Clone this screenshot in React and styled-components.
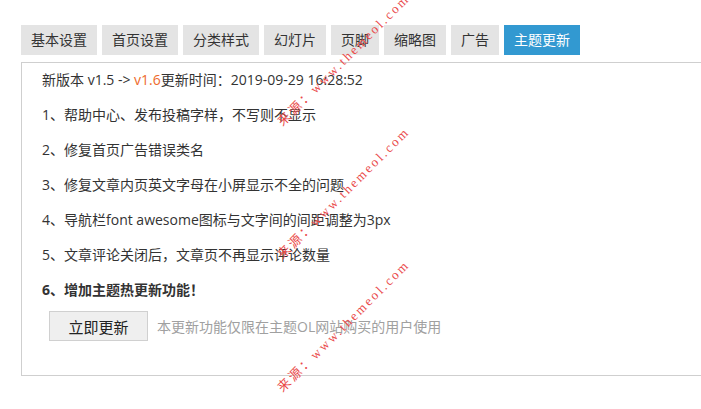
import React from 'react';
import styled, { createGlobalStyle } from 'styled-components';

const GlobalStyle = createGlobalStyle`
  html, body {
    margin: 0;
    padding: 0;
    background: #fff;
    overflow: hidden;
  }
  body {
    font-family: "Open Sans", "Noto Sans CJK SC", sans-serif;
    color: #333;
  }
`;

const Page = styled.div`
  position: relative;
  width: 701px;
  height: 409px;
  padding: 25px 0 0 21px;
  box-sizing: border-box;
  overflow: hidden;
`;

const Tabs = styled.div`
  display: flex;
  gap: 5px;
  margin-bottom: 7px;
`;

const Tab = styled.div`
  height: 30px;
  line-height: 30px;
  padding: 0 10px;
  font-size: 14px;
  background: ${(props) => (props.active ? '#3299d1' : '#e4e4e4')};
  color: ${(props) => (props.active ? '#fff' : '#333')};
`;

const Panel = styled.div`
  border: 1px solid #cfcfcf;
  margin-right: -30px;
  height: 314px;
  box-sizing: border-box;
  padding: 6px 20px 0;
`;

const Line = styled.p`
  margin: 0 0 14px;
  font-size: 14px;
  line-height: 21px;
  font-weight: ${(props) => (props.bold ? 700 : 400)};
  white-space: nowrap;
`;

const Version = styled.span`
  color: #ee6a2c;
`;

const ActionRow = styled.div`
  display: flex;
  align-items: center;
  gap: 9px;
  margin-left: 7px;
  margin-top: -3px;
`;

const UpdateButton = styled.button`
  width: 99px;
  height: 30px;
  background: #efefef;
  border: 1px solid #d0d0d0;
  font-family: inherit;
  font-size: 15px;
  color: #222;
  padding: 0;
`;

const Hint = styled.span`
  font-size: 14px;
  color: #a0a0a0;
`;

const Watermark = styled.span`
  position: absolute;
  left: 280px;
  top: ${(props) => props.y - 7}px;
  line-height: 14px;
  font-family: "Liberation Serif", "Noto Sans CJK SC", serif;
  font-size: 13px;
  letter-spacing: 2.4px;
  color: #ea4a4a;
  white-space: nowrap;
  transform-origin: 0 50%;
  transform: rotate(-45deg);
  pointer-events: none;
`;

const tabs = ['基本设置', '首页设置', '分类样式', '幻灯片', '页脚', '缩略图', '广告', '主题更新'];

const changes = [
  '1、帮助中心、发布投稿字样，不写则不显示',
  '2、修复首页广告错误类名',
  '3、修复文章内页英文字母在小屏显示不全的问题',
  '4、导航栏font awesome图标与文字间的间距调整为3px',
  '5、文章评论关闭后，文章页不再显示评论数量',
];

const App = () => (
  <>
    <GlobalStyle />
    <Page>
      <Tabs>
        {tabs.map((t) => (
          <Tab key={t} active={t === '主题更新'}>{t}</Tab>
        ))}
      </Tabs>
      <Panel>
        <Line>
          新版本 v1.5 -&gt; <Version>v1.6</Version>更新时间：2019-09-29 16:28:52
        </Line>
        {changes.map((c) => (
          <Line key={c}>{c}</Line>
        ))}
        <Line bold>6、增加主题热更新功能！</Line>
        <ActionRow>
          <UpdateButton>立即更新</UpdateButton>
          <Hint>本更新功能仅限在主题OL网站购买的用户使用</Hint>
        </ActionRow>
      </Panel>
      {[124, 257, 390].map((y) => (
        <Watermark key={y} y={y}>来源：www.themeol.com</Watermark>
      ))}
    </Page>
  </>
);

export default App;
